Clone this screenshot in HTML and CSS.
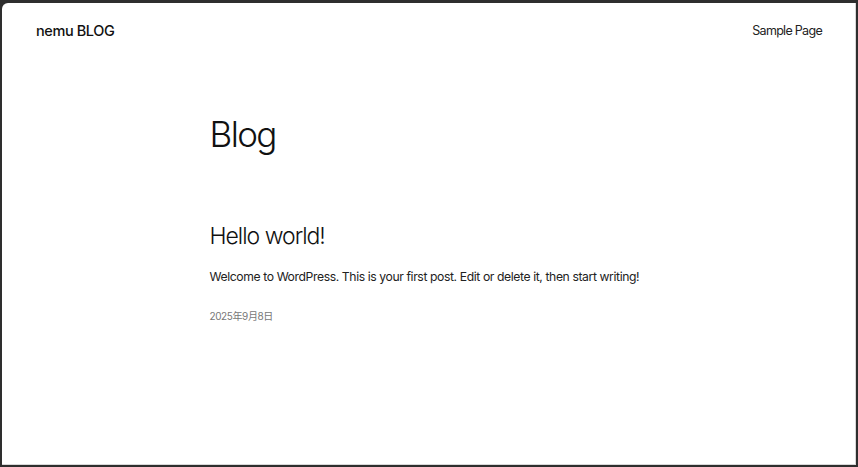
FILE: index.html
```html
<!DOCTYPE html>
<html lang="ja">
<head>
<meta charset="utf-8">
<title>nemu BLOG</title>
<link rel="stylesheet" href="styles.css">
</head>
<body>
<div class="window">
  <header class="site-header">
    <a class="site-title" href="#">nemu BLOG</a>
    <nav class="site-nav"><a href="#">Sample Page</a></nav>
  </header>
  <main class="content">
    <h1 class="page-title">Blog</h1>
    <article class="post">
      <h2 class="post-title">Hello world!</h2>
      <p class="post-excerpt">Welcome to WordPress. This is your first post. Edit or delete it, then start writing!</p>
      <div class="post-date">2025年9月8日</div>
    </article>
  </main>
</div>
</body>
</html>
```
FILE: styles.css
```css
html, body {
  margin: 0;
  padding: 0;
  height: 100%;
}
body {
  background: #2e2e2e;
  font-family: Inter, "Noto Sans CJK JP", sans-serif;
  color: #111;
  box-sizing: border-box;
  padding: 3px 2px 2px 2px;
}
.window {
  background: #fff;
  height: 100%;
  border-top-left-radius: 6px;
  border-right: 1px solid #d8d8d8;
  border-bottom: 1px solid #d8d8d8;
  box-sizing: border-box;
}
a {
  color: inherit;
  text-decoration: none;
}
.site-header {
  display: flex;
  justify-content: space-between;
  align-items: center;
  padding: 17px 33px 0 34px;
  height: 20px;
}
.site-title {
  font-size: 14.5px;
  font-weight: 500;
  letter-spacing: -0.4px;
  color: #111;
}
.site-nav {
  font-size: 12.5px;
  color: #222;
  letter-spacing: -0.7px;
}
.content {
  width: 438px;
  margin: 0 auto;
  padding-top: 73px;
}
.page-title {
  margin: 0;
  font-size: 35px;
  font-weight: 300;
  letter-spacing: -1.6px;
  line-height: 1.2;
}
.post {
  margin-top: 68px;
}
.post-title {
  margin: 0;
  font-size: 23px;
  font-weight: 300;
  letter-spacing: -1px;
  line-height: 1.2;
}
.post-excerpt {
  margin: 18px 0 0;
  font-size: 12.2px;
  color: #222;
  letter-spacing: -0.4px;
  white-space: nowrap;
}
.post-date {
  margin-top: 24px;
  font-size: 10px;
  color: #777;
  letter-spacing: -0.4px;
}
```
